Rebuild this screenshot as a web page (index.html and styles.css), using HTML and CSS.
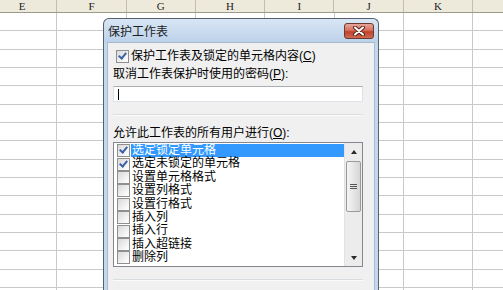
FILE: index.html
```html
<!DOCTYPE html>
<html>

<head>
    <meta charset="utf-8">
    <link rel="stylesheet" href="styles.css">
</head>

<body>
    <div id="sheet">
        <div id="col-heads">
            <div class="col-head">E</div>
            <div class="col-head">F</div>
            <div class="col-head">G</div>
            <div class="col-head">H</div>
            <div class="col-head">I</div>
            <div class="col-head">J</div>
            <div class="col-head">K</div>
            <div class="col-head"></div>
        </div>
        <div id="cells"></div>
    </div>

    <div id="dialog">
        <div id="title-bar">
            <span id="title">保护工作表</span>
            <button id="close-btn">
                <svg width="14" height="10" viewBox="0 0 14 10">
                    <path d="M3 1.5 L11 8.5 M11 1.5 L3 8.5" stroke="#5b2418" stroke-width="4" stroke-linecap="round" />
                    <path d="M3 1.5 L11 8.5 M11 1.5 L3 8.5" stroke="#ffffff" stroke-width="2" stroke-linecap="round" />
                </svg>
            </button>
        </div>
        <div id="dialog-body">
            <div class="check-row"><span class="box checked"></span>保护工作表及锁定的单元格内容(<u>C</u>)</div>
            <div class="label pw-label">取消工作表保护时使用的密码(<u>P</u>):</div>
            <div id="password"><span class="caret"></span></div>
            <div class="sep"></div>
            <div class="label list-label">允许此工作表的所有用户进行(<u>O</u>):</div>
            <div id="perm-list">
                <div id="perm-items">
                    <div class="item"><span class="box checked"></span><span class="text selected">选定锁定单元格</span></div>
                    <div class="item"><span class="box checked"></span><span class="text">选定未锁定的单元格</span></div>
                    <div class="item"><span class="box"></span><span class="text">设置单元格格式</span></div>
                    <div class="item"><span class="box"></span><span class="text">设置列格式</span></div>
                    <div class="item"><span class="box"></span><span class="text">设置行格式</span></div>
                    <div class="item"><span class="box"></span><span class="text">插入列</span></div>
                    <div class="item"><span class="box"></span><span class="text">插入行</span></div>
                    <div class="item"><span class="box"></span><span class="text">插入超链接</span></div>
                    <div class="item"><span class="box"></span><span class="text">删除列</span></div>
                </div>
                <div id="scrollbar">
                    <div class="arrow"><span class="tri up"></span></div>
                    <div class="thumb"><span class="grip"></span></div>
                    <div class="track"></div>
                    <div class="arrow"><span class="tri down"></span></div>
                </div>
            </div>
            <div class="sep bottom-sep"></div>
        </div>
    </div>
</body>

</html>
```

FILE: styles.css
```css
body {
    margin: 0;
    padding: 0;
    width: 503px;
    height: 290px;
    overflow: hidden;
    position: relative;
    background: #ffffff;
    font-family: "Liberation Sans", "Noto Sans CJK SC", sans-serif;
    font-size: 12px;
    color: #000;
}

/* spreadsheet behind the dialog */

#sheet {
    width: 100%;
    height: 100%;
}

#col-heads {
    display: flex;
    margin-left: -12px;
    height: 12px;
    border-bottom: 1px solid #9e9a8c;
    background: #eeeadb;
    overflow: hidden;
}

.col-head {
    flex: 0 0 69.3px;
    box-sizing: border-box;
    border-right: 1px solid #c3bea9;
    text-align: center;
    font-family: "Liberation Serif", serif;
    font-size: 11px;
    line-height: 12px;
    color: #222;
}

#cells {
    height: calc(100% - 13px);
    background:
        repeating-linear-gradient(to right, transparent 0 68.3px, #c9c9c9 68.3px 69.3px),
        repeating-linear-gradient(to bottom, transparent 0 17.33px, #c9c9c9 17.33px 18.33px),
        #ffffff;
    background-position: -12px 0, 0 0, 0 0;
}

/* dialog window */

#dialog {
    position: absolute;
    left: 103px;
    top: 18px;
    width: 276px;
    height: 272px;
    box-sizing: border-box;
    display: flex;
    flex-direction: column;
    border: 1px solid #56606c;
    border-bottom: none;
    border-radius: 6px 6px 0 0;
    padding: 0 3px;
    background: linear-gradient(#d9e6f5 0, #bcd2ea 23px, #c3d8ee 24px);
}

#title-bar {
    height: 23px;
    display: flex;
    align-items: center;
    justify-content: space-between;
    padding-left: 1px;
}

#title {
    font-size: 12px;
    color: #1e1e1e;
}

#close-btn {
    width: 30px;
    height: 16px;
    margin-right: 1px;
    padding: 0;
    border: 1px solid #6d3a30;
    border-radius: 3px;
    background: linear-gradient(#e6a698 0, #d7705f 45%, #c2412c 55%, #cf6a52 100%);
    display: flex;
    align-items: center;
    justify-content: center;
}

#dialog-body {
    flex: 1;
    background: #f0f0f0;
    border: 1px solid #a7b9cc;
    border-bottom: none;
    padding: 6px 11px 0 5px;
    overflow: hidden;
}

.check-row {
    display: flex;
    align-items: center;
    height: 14px;
    line-height: 14px;
    padding-left: 3px;
}

.check-row .box {
    margin-right: 2px;
}

.label {
    height: 14px;
    line-height: 14px;
}

.pw-label {
    margin-top: 4px;
}

#password {
    margin-top: 5px;
    height: 16px;
    box-sizing: border-box;
    background: #ffffff;
    border: 1px solid #dde2e8;
    border-top-color: #abadb3;
}

.caret {
    display: block;
    width: 1px;
    height: 11px;
    margin: 2px 0 0 4px;
    background: #000;
}

.sep {
    margin-top: 12px;
    border-top: 1px solid #d8dde2;
    border-bottom: 1px solid #fbfbfb;
}

.list-label {
    margin-top: 10px;
}

/* checkboxes */

.box {
    display: inline-block;
    position: relative;
    flex: 0 0 auto;
    width: 13px;
    height: 13px;
    box-sizing: border-box;
    border: 1px solid #8f8f8f;
    background: linear-gradient(135deg, #d8d8d8, #f6f6f6 70%, #ffffff);
}

.box.checked::after {
    content: "";
    position: absolute;
    left: 3px;
    top: 0px;
    width: 3px;
    height: 6px;
    border-right: 2px solid #3c5fa3;
    border-bottom: 2px solid #3c5fa3;
    transform: rotate(40deg);
}

/* permissions list */

#perm-list {
    margin-top: 2px;
    height: 125px;
    box-sizing: border-box;
    border: 1px solid #828790;
    background: #ffffff;
    display: flex;
}

#perm-items {
    flex: 1;
    padding-top: 1px;
}

.item {
    display: flex;
    align-items: center;
    height: 13.4px;
    padding-left: 3px;
}

.item .text {
    flex: 1;
    height: 13.4px;
    line-height: 13.4px;
    margin-left: 1px;
    padding-left: 1px;
    white-space: nowrap;
}

.item .text.selected {
    background: #3399ff;
    color: #ffffff;
}

#scrollbar {
    width: 17px;
    display: flex;
    flex-direction: column;
    background: #ececec;
    border-left: 1px solid #e2e2e2;
}

.arrow {
    height: 17px;
    display: flex;
    align-items: center;
    justify-content: center;
}

.tri {
    width: 0;
    height: 0;
    border-left: 3.5px solid transparent;
    border-right: 3.5px solid transparent;
}

.tri.up {
    border-bottom: 4px solid #2a2a2a;
}

.tri.down {
    border-top: 4px solid #2a2a2a;
}

.thumb {
    height: 51px;
    margin: 1px 1px 0 1px;
    box-sizing: border-box;
    border: 1px solid #9a9a9a;
    border-radius: 2px;
    background: linear-gradient(to right, #f4f4f4, #e6e6e6 50%, #d6d6d6);
    display: flex;
    align-items: center;
    justify-content: center;
}

.grip {
    width: 7px;
    height: 5px;
    background: repeating-linear-gradient(to bottom, #555 0 1px, transparent 1px 2px);
}

.track {
    flex: 1;
}
```
